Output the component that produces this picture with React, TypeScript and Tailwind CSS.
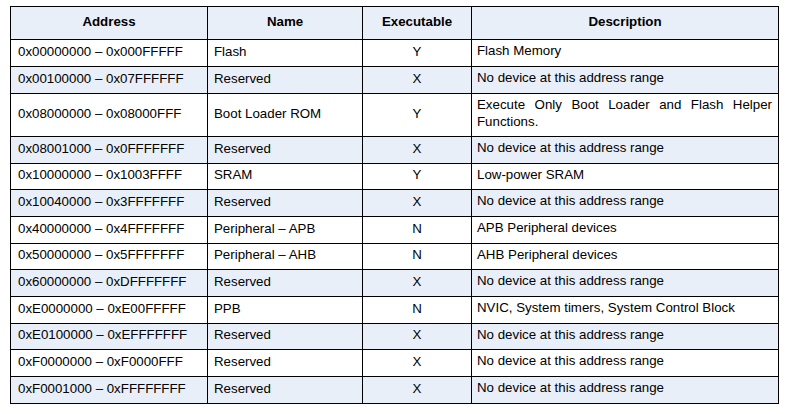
import React from "react";

type Row = { a: string; n: string; e: string; d: string; blue: boolean; h: string };

const rows: Row[] = [
  { a: "0x00000000 – 0x000FFFFF", n: "Flash", e: "Y", d: "Flash Memory", blue: false, h: "h-[27px]" },
  { a: "0x00100000 – 0x07FFFFFF", n: "Reserved", e: "X", d: "No device at this address range", blue: true, h: "h-[27px]" },
  { a: "0x08000000 – 0x08000FFF", n: "Boot Loader ROM", e: "Y", d: "Execute Only Boot Loader and Flash Helper Functions.", blue: false, h: "h-[43px]" },
  { a: "0x08001000 – 0x0FFFFFFF", n: "Reserved", e: "X", d: "No device at this address range", blue: true, h: "h-[27px]" },
  { a: "0x10000000 – 0x1003FFFF", n: "SRAM", e: "Y", d: "Low-power SRAM", blue: false, h: "h-[26px]" },
  { a: "0x10040000 – 0x3FFFFFFF", n: "Reserved", e: "X", d: "No device at this address range", blue: true, h: "h-[27px]" },
  { a: "0x40000000 – 0x4FFFFFFF", n: "Peripheral – APB", e: "N", d: "APB Peripheral devices", blue: false, h: "h-[27px]" },
  { a: "0x50000000 – 0x5FFFFFFF", n: "Peripheral – AHB", e: "N", d: "AHB Peripheral devices", blue: false, h: "h-[26px]" },
  { a: "0x60000000 – 0xDFFFFFFF", n: "Reserved", e: "X", d: "No device at this address range", blue: true, h: "h-[27px]" },
  { a: "0xE0000000 – 0xE00FFFFF", n: "PPB", e: "N", d: "NVIC, System timers, System Control Block", blue: false, h: "h-[27px]" },
  { a: "0xE0100000 – 0xEFFFFFFF", n: "Reserved", e: "X", d: "No device at this address range", blue: true, h: "h-[26px]" },
  { a: "0xF0000000 – 0xF0000FFF", n: "Reserved", e: "X", d: "No device at this address range", blue: false, h: "h-[27px]" },
  { a: "0xF0001000 – 0xFFFFFFFF", n: "Reserved", e: "X", d: "No device at this address range", blue: true, h: "h-[27px]" },
];

export default function App() {
  return (
    <div className="w-[803px] h-[414px] bg-white pt-[6px] pl-[10px] text-[13.3px] text-black" style={{ fontFamily: '"Liberation Sans", Arial, sans-serif' }}>
      <div className="grid w-[769px] grid-cols-[197px_155px_109px_307px] border-l border-t border-black">
        <div className="h-[33px] pb-[2px] flex items-center justify-center font-bold bg-[#e9eff8] border-r border-b border-black">Address</div>
        <div className="h-[33px] pb-[2px] flex items-center justify-center font-bold bg-[#e9eff8] border-r border-b border-black">Name</div>
        <div className="h-[33px] pb-[2px] flex items-center justify-center font-bold bg-[#e9eff8] border-r border-b border-black">Executable</div>
        <div className="h-[33px] pb-[2px] flex items-center justify-center font-bold bg-[#e9eff8] border-r border-b border-black">Description</div>
        {rows.map((r, i) => {
          const bg = r.blue ? "bg-[#e9eff8]" : "bg-white";
          return (
            <React.Fragment key={i}>
              <div className={`${r.h} ${bg} flex items-center pb-[3px] pl-[7px] border-r border-b border-black whitespace-nowrap`}>{r.a}</div>
              <div className={`${r.h} ${bg} flex items-center pb-[3px] pl-[6px] border-r border-b border-black whitespace-nowrap`}>{r.n}</div>
              <div className={`${r.h} ${bg} flex items-center pb-[3px] justify-center border-r border-b border-black`}>{r.e}</div>
              <div className={`${r.h} ${bg} flex items-center pb-[3px] pl-[5px] pr-[6px] border-r border-b border-black`}>
                <span className="block w-full text-justify leading-[16.5px]">{r.d}</span>
              </div>
            </React.Fragment>
          );
        })}
      </div>
    </div>
  );
}
